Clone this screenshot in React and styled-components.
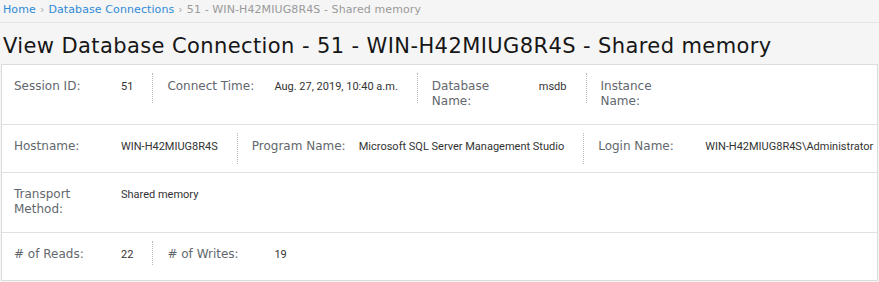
import React from "react";
import styled, { createGlobalStyle } from "styled-components";

const rows = [
  {
    rule: 30,
    cells: [
      { label: "Session ID:", value: "51" },
      { label: "Connect Time:", value: "Aug. 27, 2019, 10:40 a.m." },
      { label: "Database\nName:", value: "msdb" },
      { label: "Instance\nName:", value: "" },
    ],
  },
  {
    rule: 31,
    cells: [
      { label: "Hostname:", value: "WIN-H42MIUG8R4S" },
      { label: "Program Name:", value: "Microsoft SQL Server Management Studio" },
      { label: "Login Name:", value: "WIN-H42MIUG8R4S\\Administrator" },
    ],
  },
  {
    rule: 30,
    cells: [{ label: "Transport\nMethod:", value: "Shared memory" }],
  },
  {
    rule: 24,
    cells: [
      { label: "# of Reads:", value: "22" },
      { label: "# of Writes:", value: "19" },
    ],
  },
];

const GlobalStyle = createGlobalStyle`
  body {
    margin: 0;
    background: #f5f5f5;
    font-family: "DejaVu Sans", Verdana, sans-serif;
  }
`;

const Breadcrumb = styled.nav`
  padding: 3px 3px 6px;
  line-height: 13px;
  font-size: 11px;
  letter-spacing: 0.1px;
  color: #9a9a9a;
  border-bottom: 1px solid #e6e6e6;
  white-space: nowrap;
`;

const Crumb = styled.a`
  color: #2f8bd6;
  text-decoration: none;
`;

const Sep = styled.span`
  color: #a8a8a8;
  margin: 0 4px;
`;

const Title = styled.h1`
  margin: 11px 0 6px;
  padding-left: 3px;
  font-size: 21px;
  line-height: 24px;
  font-weight: normal;
  letter-spacing: 0.4px;
  color: #161616;
  white-space: nowrap;
`;

const Card = styled.div`
  margin: 0 1px;
  background: #fff;
  border: 1px solid #dcdcdc;
`;

const Row = styled.div`
  display: flex;
  overflow: hidden;
  border-bottom: 1px solid #e0e0e0;

  &:last-child {
    border-bottom: none;
  }
`;

const Cell = styled.div`
  position: relative;
  display: flex;
  align-items: flex-start;
  flex-shrink: 0;
  box-sizing: border-box;
  min-height: 47px;
  padding: 13px 20px 16px 14px;

  &:first-child {
    padding-left: 12px;
  }

  &::after {
    content: "";
    position: absolute;
    right: 0;
    top: 8px;
    height: ${(p) => p.$rule}px;
    border-right: 1px dotted #b8b8b8;
  }

  &:last-child::after {
    display: none;
  }
`;

const Label = styled.div`
  flex: 0 0 107px;
  padding-top: 1px;
  font-size: 12px;
  line-height: 14.5px;
  color: #62676d;
  white-space: pre-line;
`;

const Value = styled.div`
  padding-top: 2px;
  font-family: Roboto, "Liberation Sans", sans-serif;
  font-size: 11px;
  line-height: 14.5px;
  color: #333;
  white-space: nowrap;
`;

const App = () => {
  return (
    <>
      <GlobalStyle />
      <Breadcrumb>
        <Crumb href="#">Home</Crumb>
        <Sep>›</Sep>
        <Crumb href="#">Database Connections</Crumb>
        <Sep>›</Sep>
        51 - WIN-H42MIUG8R4S - Shared memory
      </Breadcrumb>
      <Title>View Database Connection - 51 - WIN-H42MIUG8R4S - Shared memory</Title>
      <Card>
        {rows.map((row, i) => (
          <Row key={i}>
            {row.cells.map((cell) => (
              <Cell key={cell.label} $rule={row.rule}>
                <Label>{cell.label}</Label>
                <Value>{cell.value}</Value>
              </Cell>
            ))}
          </Row>
        ))}
      </Card>
    </>
  );
};

export default App;
